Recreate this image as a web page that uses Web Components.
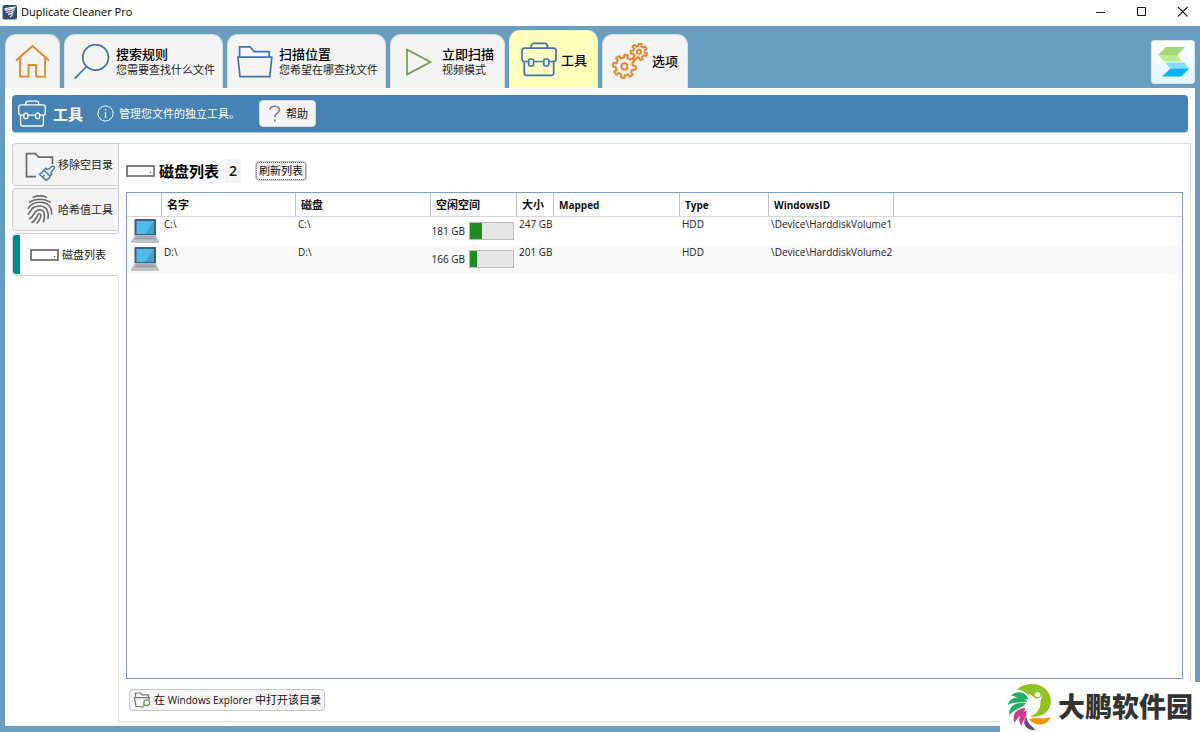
<!DOCTYPE html>
<html lang="zh-CN">
<head>
<meta charset="utf-8">
<title>Duplicate Cleaner Pro</title>
<style>
html, body { margin: 0; height: 100%; }
body { font-family: "Open Sans", "Noto Sans CJK SC", sans-serif; font-size: 11px; line-height: 16px; color: #111; background: #fff; }
</style>
</head>
<body>
<app-window></app-window>

<template id="tpl-window">
<style>
:host { display: flex; flex-direction: column; min-height: 100vh; position: relative; background: #6a9ec1; box-sizing: border-box; }
header { display: flex; align-items: center; height: 26px; background: #fff; padding-left: 2px; gap: 3px; box-sizing: border-box; padding-bottom: 2px; }
header h1 { font: inherit; margin: 0; flex: 1; color: #000; }
.controls { display: flex; gap: 7px; }
.controls button { width: 34px; height: 24px; border: 0; padding: 0; background: none; display: grid; place-items: center; }
nav { display: flex; align-items: flex-end; gap: 4px; padding: 4px 5px 0; height: 58px; }
.brand { margin-left: auto; align-self: center; width: 44px; height: 44px; border: 1px solid #d6e6ee; border-radius: 3px; background: linear-gradient(#fff, #e3f5fc); padding: 0; display: grid; place-items: center; box-sizing: border-box; margin-top: 6px; }
.page { flex: 1; display: flex; flex-direction: column; margin: 0 5px 6px; background: #fff; padding: 7px 4px 4px 7px; }
tool-banner { margin-right: 3px; }
.work { flex: 1; display: flex; margin-top: 10px; }
aside { width: 107px; display: flex; flex-direction: column; gap: 2px; position: relative; z-index: 1; }
main { flex: 1; min-width: 0; display: flex; flex-direction: column; border: 1px solid #dedede; margin-left: -1px; padding: 14px 7px 10px; }
.title { display: flex; align-items: center; height: 26px; }
.title h2 { font-size: 15px; line-height: 24px; margin: 0 6px 0 3px; font-weight: 700; color: #000; }
.count { background: #f3f3f3; font-size: 14px; line-height: 24px; font-weight: 600; padding: 0 4px; margin-right: 14px; }
disk-table { flex: 1; margin-top: 8px; }
.foot { display: flex; margin: 10px 0 0 3px; }
.latin { font-size: 10px; }
site-mark { position: absolute; right: 0; bottom: 0; z-index: 2; }
</style>
<header>
  <ui-icon name="app" size="16"></ui-icon>
  <h1>Duplicate Cleaner Pro</h1>
  <div class="controls">
    <button aria-label="最小化"><ui-icon name="min" size="12"></ui-icon></button>
    <button aria-label="最大化"><ui-icon name="max" size="12"></ui-icon></button>
    <button aria-label="关闭"><ui-icon name="close" size="12"></ui-icon></button>
  </div>
</header>
<nav>
  <nav-tab icon="home" color="#e8832a" label="主页"></nav-tab>
  <nav-tab icon="search" color="#3e74b2">搜索规则<span slot="sub">您需要查找什么文件</span></nav-tab>
  <nav-tab icon="folder" color="#3e74b2">扫描位置<span slot="sub">您希望在哪查找文件</span></nav-tab>
  <nav-tab icon="play" color="#6b9e4a">立即扫描<span slot="sub">视频模式</span></nav-tab>
  <nav-tab icon="toolbox" color="#3e74b2" active>工具</nav-tab>
  <nav-tab icon="gears" color="#e8832a">选项</nav-tab>
  <button class="brand" aria-label="关于"><ui-icon name="brand" size="32"></ui-icon></button>
</nav>
<div class="page">
  <tool-banner heading="工具">管理您文件的独立工具。</tool-banner>
  <div class="work">
    <aside>
      <side-tab icon="cleanfolder">移除空目录</side-tab>
      <side-tab icon="finger">哈希值工具</side-tab>
      <side-tab icon="drive" active>磁盘列表</side-tab>
    </aside>
    <main>
      <div class="title">
        <ui-icon name="drive" size="30" style="color:#6a6a6a"></ui-icon>
        <h2>磁盘列表</h2>
        <span class="count">2</span>
        <tool-button focused>刷新列表</tool-button>
      </div>
      <disk-table></disk-table>
      <div class="foot"><tool-button icon="explore">在 <span class="latin">Windows Explorer</span> 中打开该目录</tool-button></div>
    </main>
  </div>
</div>
<site-mark></site-mark>
</template>

<template id="tpl-nav-tab">
<style>
:host { display: block; height: 54px; }
:host([active]) { height: 58px; }
button { width: 100%; min-width: 115px; box-sizing: border-box; height: 100%; display: flex; align-items: center; gap: 6px; padding: 0 7px 0 9px; border: 1px solid #d9dfe3; border-bottom: 0; border-radius: 11px 11px 0 0; background: #f4f4f4; font: inherit; color: #000; text-align: left; }
:host([single]) button { min-width: 0; gap: 4px; padding: 0 9px 1px; }
:host([active]) button { background: #ffffbe; border-color: #eef0c4; padding: 0 10px 0 11px; }
:host([label]) button { padding: 0 8px 0 9px; }
.t { font-size: 13px; line-height: 16px; font-weight: 500; display: block; }
.s { font-size: 11px; line-height: 16px; display: block; color: #222; }
</style>
<button><ui-icon size="36"></ui-icon><span class="txt"><span class="t"><slot></slot></span><span class="s"><slot name="sub"></slot></span></span></button>
</template>

<template id="tpl-banner">
<style>
:host { display: flex; align-items: center; height: 37px; border-radius: 4px; background: #4682b4; color: #fff; padding: 0 6px; border-bottom: 1px solid #a9c5dc; }
h2 { font-size: 15px; line-height: 20px; margin: 0 14px 0 7px; font-weight: 700; }
p { margin: 0 19px 0 5px; }
</style>
<ui-icon name="toolbox" size="28"></ui-icon><h2></h2><ui-icon name="info" size="17"></ui-icon><p><slot></slot></p><tool-button icon="help" large>帮助</tool-button>
</template>

<template id="tpl-side-tab">
<style>
:host { display: block; height: 43px; }
button { width: 100%; height: 100%; box-sizing: border-box; display: flex; align-items: center; gap: 2px; padding: 0 0 0 11px; border: 1px solid #cfcfcf; border-radius: 4px 0 0 4px; background: #f4f4f4; font: inherit; color: #222; white-space: nowrap; }
:host([active]) button { background: #fff; border-right-color: #fff; border-left: 0; box-shadow: inset 1px 0 #cfcfcf; padding-left: 1px; }
.bar { display: none; width: 7px; height: 39px; background: #008b8b; border-radius: 3px 0 0 3px; margin-right: 8px; }
:host([active]) .bar { display: block; }
ui-icon { color: #6a6a6a; }
</style>
<button><span class="bar"></span><ui-icon></ui-icon><span><slot></slot></span></button>
</template>

<template id="tpl-button">
<style>
:host { display: block; }
button { display: flex; align-items: center; gap: 3px; height: 22px; padding: 0 3px; border: 1px solid #c6c6c6; border-radius: 4px; background: #f4f4f4; font: inherit; color: #111; white-space: nowrap; box-sizing: border-box; }
:host([large]) button { height: 27px; padding: 0 7px 0 6px; gap: 2px; border-color: #d8d8d8; }
:host([focused]) button { height: 20px; outline: 1px dotted #555; outline-offset: -2px; }
</style>
<button><span><slot></slot></span></button>
</template>

<template id="tpl-table">
<style>
:host { display: block; border: 1px solid #7b9fc4; background: #fff; overflow: hidden; }
table { width: 100%; table-layout: fixed; border-collapse: separate; border-spacing: 0; }
th { text-align: left; height: 24px; box-sizing: border-box; padding: 0 0 0 5px; font-weight: 600; color: #111; border-right: 1px solid #c0c0c0; border-bottom: 1px solid #d8d8d8; line-height: 16px; }
th:last-child { border-right: 0; }
th.latin { font-size: 10px; font-weight: 700; }
td { height: 28px; padding: 0 0 0 2px; vertical-align: top; font-size: 10px; line-height: 14px; color: #222; white-space: nowrap; }
td:first-child { padding-left: 4px; }
tr:nth-child(even) td { background: #f9f9f9; }
.free { display: flex; align-items: center; justify-content: flex-end; gap: 4px; height: 28px; padding-right: 3px; }
.meter { flex: none; width: 45px; height: 18px; box-sizing: border-box; border: 1px solid #bcbcbc; background: #e6e6e6; }
.meter i { display: block; height: 100%; background: #228b22; }
</style>
<table>
<colgroup><col style="width:35px"><col style="width:134px"><col style="width:135px"><col style="width:86px"><col style="width:37px"><col style="width:126px"><col style="width:89px"><col style="width:125px"><col></colgroup>
<thead><tr><th></th><th>名字</th><th>磁盘</th><th>空闲空间</th><th>大小</th><th class="latin">Mapped</th><th class="latin">Type</th><th class="latin">WindowsID</th><th></th></tr></thead>
<tbody></tbody>
</table>
</template>

<template id="tpl-mark">
<style>
:host { display: flex; align-items: center; width: 194px; height: 50px; background: #fff; padding-left: 6px; color: #333; gap: 6px; font-size: 27px; line-height: 40px; font-weight: 900; white-space: nowrap; }
</style>
<ui-icon name="petals" size="46"></ui-icon><span>大鹏软件园</span>
</template>

<script>
// Outline of a toothed wheel with `n` teeth.
function gear(cx, cy, n, outer, root) {
  const pts = [], step = Math.PI * 2 / n;
  const at = (a, r) => (cx + r * Math.cos(a)).toFixed(1) + ' ' + (cy + r * Math.sin(a)).toFixed(1);
  for (let i = 0; i < n; i++) {
    const a = i * step - Math.PI / 2 + .15;
    pts.push(at(a - step * .27, root), at(a - step * .2, outer), at(a + step * .2, outer), at(a + step * .27, root));
  }
  return 'M' + pts.join('L') + 'Z';
}
const ICONS = {
  home: ['0 0 36 36', '<g stroke-width="1.8"><path d="M1 16.5 17.5 2 34 16.5"/><path d="M5 13.5V32.7H13.5V21H21V32.7H30V13.5"/></g>'],
  search: ['0 0 36 36', '<g stroke-width="1.7"><circle cx="21.6" cy="13.4" r="12.8"/><path d="M12.5 22.5.7 34.6"/></g>'],
  folder: ['0 0 36 36', '<g stroke-width="1.7"><path d="M2.6 13V2.8H13L17.2 7.6H32.2V13"/><path d="M.9 13.2H34.8L32.8 32.6H3Z"/></g>'],
  play: ['0 0 36 36', '<path stroke-width="1.7" d="M7 5.6 30.500 18 7 30.6Z"/>'],
  toolbox: ['0 0 36 36', '<g stroke-width="1.7"><path d="M7 19.5H3.4a2.4 2.4 0 0 1-2.4-2.4V8.6a2.4 2.4 0 0 1 2.4-2.4H32.6a2.4 2.4 0 0 1 2.4 2.4v8.5a2.4 2.4 0 0 1-2.4 2.4H28M13 19.5H22M3.3 19.5V31a2.4 2.4 0 0 0 2.4 2.4H30.3a2.4 2.4 0 0 0 2.4-2.4V19.5M10 6V4.4a3 3 0 0 1 3-3H23.6a3 3 0 0 1 3 3V6"/><rect x="7.6" y="17" width="5" height="7" rx="1.6"/><rect x="22.8" y="17" width="5" height="7" rx="1.6"/></g>'],
  gears: ['0 0 36 36', `<g stroke-width="1.9" stroke-linejoin="round"><path d="${gear(12.4, 23.4, 8, 11.6, 8.7)}"/><circle cx="12.4" cy="23.4" r="3.1"/><path d="${gear(27, 8.8, 7, 8.3, 5.9)}"/><circle cx="27" cy="8.8" r="2.1"/></g>`],
  brand: ['0 0 32 32', '<path fill="#a5d777" d="M9 1H28L20.5 9H1Z"/><path fill="#bdec8d" d="M1 9H20.5L25 15.5H7Z"/><path fill="#84dcff" d="M8 16.5H27L32 22.5H13.5Z"/><path fill="#00b4fb" d="M13.5 22.5H32L24.5 30.5H5Z"/>', 'none'],
  app: ['0 0 16 16', '<rect x=".5" y="1" width="14.5" height="14.5" rx="2" fill="#36506a"/><path d="M2.5 5.2C5 3.6 9 3.5 13 3.2 11.5 5.5 7 5.2 3 6.300M4.2 8.3C7 8.3 10.5 7.3 12.8 5.6M6 10.5C8 10.3 10 9.5 11.6 8M8 13C9 12.5 10 11.5 10.5 10.3" stroke="#e8eef3" stroke-width="1.3"/>', 'none'],
  min: ['0 0 12 12', '<path d="M1 6.5H10" stroke="#222"/>'],
  max: ['0 0 12 12', '<path d="M1.5 1.5H9.5V9.5H1.5Z" stroke="#111"/>'],
  close: ['0 0 12 12', '<path d="M1 1 10.5 10.5M10.5 1 1 10.5" stroke="#222" stroke-width="1.1"/>'],
  info: ['0 0 17 17', '<circle cx="8.5" cy="8.5" r="7.6"/><path d="M8.5 7.2V13M8.5 4.2V5.6" stroke-width="1.2"/>'],
  help: ['0 0 15 18', '<path d="M2.500 4.8C2.7 2.6 4.7 1.2 7.2 1.2S12 2.7 12 4.9C12 8 7.3 8.3 7.3 12.3M7.3 14.5V16.5" stroke="#777" stroke-width="1.5"/>'],
  drive: ['0 0 30 30', '<rect x="1" y="10" width="27" height="10" stroke-width="1.7"/><circle cx="24.5" cy="16.5" r=".8" fill="#666" stroke="none"/>'],
  cleanfolder: ['0 0 32 32', '<path d="M12 27.6H2.5V4.6H11.5L14.5 8.2H28.5V15" stroke-width="1.7"/><g stroke="#3e7bbd" stroke-width="1.5" stroke-linejoin="round"><path d="M28 17.5C29.5 16.6 31 18 30.3 19.4L26.7 23.5 28 25 26 27 19.8 21.2 21.8 19.2 23.6 20.6Z"/><path d="M19.8 21.2C19 23.5 17.5 24.6 15.5 25.2L22 31.3C24.5 30.5 25.7 29 26 27M18.5 28 20.5 26"/></g>'],
  finger: ['0 0 32 32', '<g stroke-width="1.6" stroke-linecap="round"><path d="M9.2 3.2C13.5 1.6 18.500 1.6 22.5 3.2"/><path d="M5.6 8.2C11.5 4.300 20.500 4.300 26 8.2"/><path d="M4.2 14.4C6.5 10 11 8.2 16 8.200 23 8.200 28 12.500 27.600 20"/><path d="M4.200 20C7.200 18 6.500 12 15.800 12 22 12 25 16.500 24 24.500"/><path d="M5.500 24.600C11 22.500 9.500 15.800 15.600 15.800 20.500 15.800 21.300 20.500 19.500 27.800"/><path d="M8 28.300C13.500 26 12.500 19.700 15.500 19.700 18.500 19.700 15.800 26.500 13 29"/></g>'],
  explore: ['0 0 18 18', '<path d="M2.5 6.5V2H7.5L9 3.8H15.5V6.5M8.5 15.5H3L1.5 6.7H16.5L16 9" stroke="#777" stroke-width="1.2"/><g stroke="#6f9c4c" stroke-width="1.3"><circle cx="13.7" cy="11.8" r="2.9"/><path d="M11.6 13.8 8.8 16.9"/></g>'],
  laptop: ['0 0 28 28', '<rect x="3.5" y="2" width="21.5" height="16.5" rx="1" fill="#4a5b73"/><rect x="5.5" y="4" width="17.5" height="13" fill="#4cbce8"/><path d="M23 4V17H14Z" fill="#3fa3d0"/><path d="M3.5 18.5H25L28 24.5H0Z" fill="#bfc3cd"/><path d="M4.5 20H24M3.5 21.8H25" stroke="#858b99" stroke-width=".9"/><path d="M0 24.5H28V25.6H0Z" fill="#9a9fab"/>', 'none'],
  petals: ['0 0 46 46', '<path fill="#8fc31f" d="M10.500 5.500C18-1.500 32-2 39.500 5 48 13 46.500 27 35 31.500 31 33 27 33 24 32.500 31 30 34.500 25 34.500 18.500 34.500 15.500 35.500 13 37.500 10.500 34 14.500 30 15.500 26 13.500 21 11 18 5.500 10.500 5.500Z"/><path fill="#fff" d="M19 6C22 9 25 12 29 13.500L26 16C24 11.500 22 8.500 19 6Z"/><circle cx="31.600" cy="10.600" r="2.700" fill="#fff"/><g fill="#22ac68"><path d="M22.500 15.500C21 9 12 5 5 11.500 9 12 11 14.500 22.500 15.500Z"/><path d="M21.500 17.300C14 10.500 3 13.500 2 21 8 17.500 13 19.500 21.500 17.300Z"/><path d="M20.500 19C11 17.500 1.500 22 3.500 31.500 8 25 14 25.500 20.500 19Z"/></g><g fill="#cc3b8c"><path d="M19.500 24C11.500 24 5 29.500 8.500 39 11.500 32 17 32 19.500 24Z"/><path d="M20.500 26.500C14.500 29 10.500 34.500 15.500 42 16.500 35.500 21.500 33.500 20.500 26.500Z"/></g><path fill="#69408f" d="M20.500 32.500C16 38 18 46 29.500 46 26 41.500 21 40 20.500 32.500Z"/><path fill="#f39800" d="M23 35.500C29 32 33 36.500 45 33 41.500 41.500 30 43.500 23 35.500Z"/>', 'none']
};
const define = (tag, cls) => customElements.define(tag, cls);
const stamp = (el, id) => {
  const root = el.attachShadow({ mode: 'open' });
  root.append(document.getElementById(id).content.cloneNode(true));
  return root;
};

define('ui-icon', class extends HTMLElement {
  connectedCallback() {
    if (this.shadowRoot) return;
    const [box, body, stroke = 'currentColor'] = ICONS[this.getAttribute('name')];
    const size = this.getAttribute('size') || 32;
    this.attachShadow({ mode: 'open' }).innerHTML =
      `<style>:host{display:block;flex:none}svg{display:block}</style><svg width="${size}" height="${size}" viewBox="${box}" fill="none" stroke="${stroke}" aria-hidden="true">${body}</svg>`;
  }
});

define('nav-tab', class extends HTMLElement {
  connectedCallback() {
    if (this.shadowRoot) return;
    const tpl = document.getElementById('tpl-nav-tab').content.cloneNode(true);
    const icon = tpl.querySelector('ui-icon');
    icon.setAttribute('name', this.getAttribute('icon'));
    icon.style.color = this.getAttribute('color');
    if (!this.querySelector('[slot=sub]')) {
      tpl.querySelector('.s').remove();
      this.setAttribute('single', '');
    }
    if (this.hasAttribute('label')) {
      tpl.querySelector('.txt').remove();
      tpl.querySelector('button').setAttribute('aria-label', this.getAttribute('label'));
    }
    this.attachShadow({ mode: 'open' }).append(tpl);
  }
});

define('side-tab', class extends HTMLElement {
  connectedCallback() {
    if (this.shadowRoot) return;
    const tpl = document.getElementById('tpl-side-tab').content.cloneNode(true);
    const icon = tpl.querySelector('ui-icon');
    icon.setAttribute('name', this.getAttribute('icon'));
    icon.setAttribute('size', this.getAttribute('icon') === 'drive' ? 30 : 32);
    this.attachShadow({ mode: 'open' }).append(tpl);
  }
});

define('tool-button', class extends HTMLElement {
  connectedCallback() {
    if (this.shadowRoot) return;
    const root = stamp(this, 'tpl-button');
    const name = this.getAttribute('icon');
    if (name) {
      const icon = document.createElement('ui-icon');
      icon.setAttribute('name', name);
      icon.setAttribute('size', 18);
      root.querySelector('button').prepend(icon);
    }
  }
});

define('tool-banner', class extends HTMLElement {
  connectedCallback() {
    if (this.shadowRoot) return;
    stamp(this, 'tpl-banner').querySelector('h2').textContent = this.getAttribute('heading');
  }
});

define('disk-table', class extends HTMLElement {
  connectedCallback() {
    if (this.shadowRoot) return;
    const rows = [
      ['C:\\', '181 GB', 27, '247 GB', 'HDD', '\\Device\\HarddiskVolume1'],
      ['D:\\', '166 GB', 17, '201 GB', 'HDD', '\\Device\\HarddiskVolume2']
    ];
    stamp(this, 'tpl-table').querySelector('tbody').innerHTML = rows.map(([d, free, used, size, type, id]) =>
      `<tr><td><ui-icon name="laptop" size="28"></ui-icon></td><td>${d}</td><td>${d}</td><td><div class="free"><span>${free}</span><div class="meter" role="meter" aria-label="${d}" aria-valuenow="${used}" aria-valuemin="0" aria-valuemax="100"><i style="width:${used}%"></i></div></div></td><td>${size}</td><td></td><td>${type}</td><td>${id}</td><td></td></tr>`).join('');
  }
});

define('site-mark', class extends HTMLElement {
  connectedCallback() { if (!this.shadowRoot) stamp(this, 'tpl-mark'); }
});

define('app-window', class extends HTMLElement {
  connectedCallback() { if (!this.shadowRoot) stamp(this, 'tpl-window'); }
});
</script>
</body>
</html>
